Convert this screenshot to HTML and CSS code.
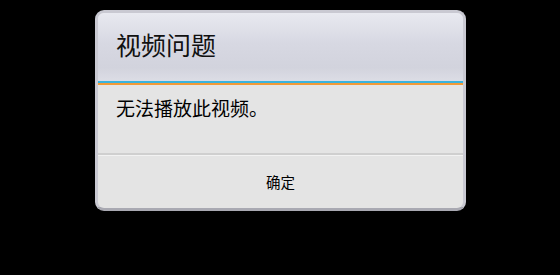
FILE: index.html
```html
<!DOCTYPE html>
<html>
<head>
<meta charset="utf-8">
<link rel="stylesheet" href="styles.css">
</head>
<body>
<div class="screen">
  <div class="dialog">
    <div class="title">视频问题</div>
    <div class="accent"></div>
    <div class="message">无法播放此视频。</div>
    <div class="divider"></div>
    <div class="button">确定</div>
  </div>
</div>
</body>
</html>
```
FILE: styles.css
```css
html, body {
  margin: 0;
  padding: 0;
  background: #000;
  width: 560px;
  height: 275px;
  overflow: hidden;
  font-family: "Noto Sans CJK SC", "Noto Sans", sans-serif;
}
.screen {
  display: flex;
  justify-content: center;
  padding-top: 10px;
  padding-left: 1px;
}
.dialog {
  width: 365px;
  height: 195px;
  border: 3px solid #c9c9d2;
  border-bottom-color: #a9a9b2;
  border-radius: 9px;
  background: #e4e4e4;
  display: flex;
  flex-direction: column;
  overflow: hidden;
}
.title {
  height: 68px;
  flex: none;
  box-sizing: border-box;
  padding-left: 18px;
  padding-bottom: 6px;
  display: flex;
  align-items: center;
  font-size: 25px;
  color: #111;
  background: linear-gradient(to bottom, #e8e9f0 0%, #d7d8e2 45%, #d2d3dd 80%, #dcdde5 100%);
}
.accent {
  height: 2px;
  flex: none;
  background: #39b3de;
  border-bottom: 2px solid #f29a36;
}
.message {
  height: 68px;
  flex: none;
  box-sizing: border-box;
  padding-left: 18px;
  padding-top: 9px;
  font-size: 19px;
  color: #000;
}
.divider {
  height: 2px;
  flex: none;
  background: #cfcfcf;
  border-bottom: 1px solid #f2f2f2;
}
.button {
  flex: 1;
  display: flex;
  align-items: center;
  justify-content: center;
  font-size: 14.5px;
  color: #000;
  padding-bottom: 2px;
}
```
